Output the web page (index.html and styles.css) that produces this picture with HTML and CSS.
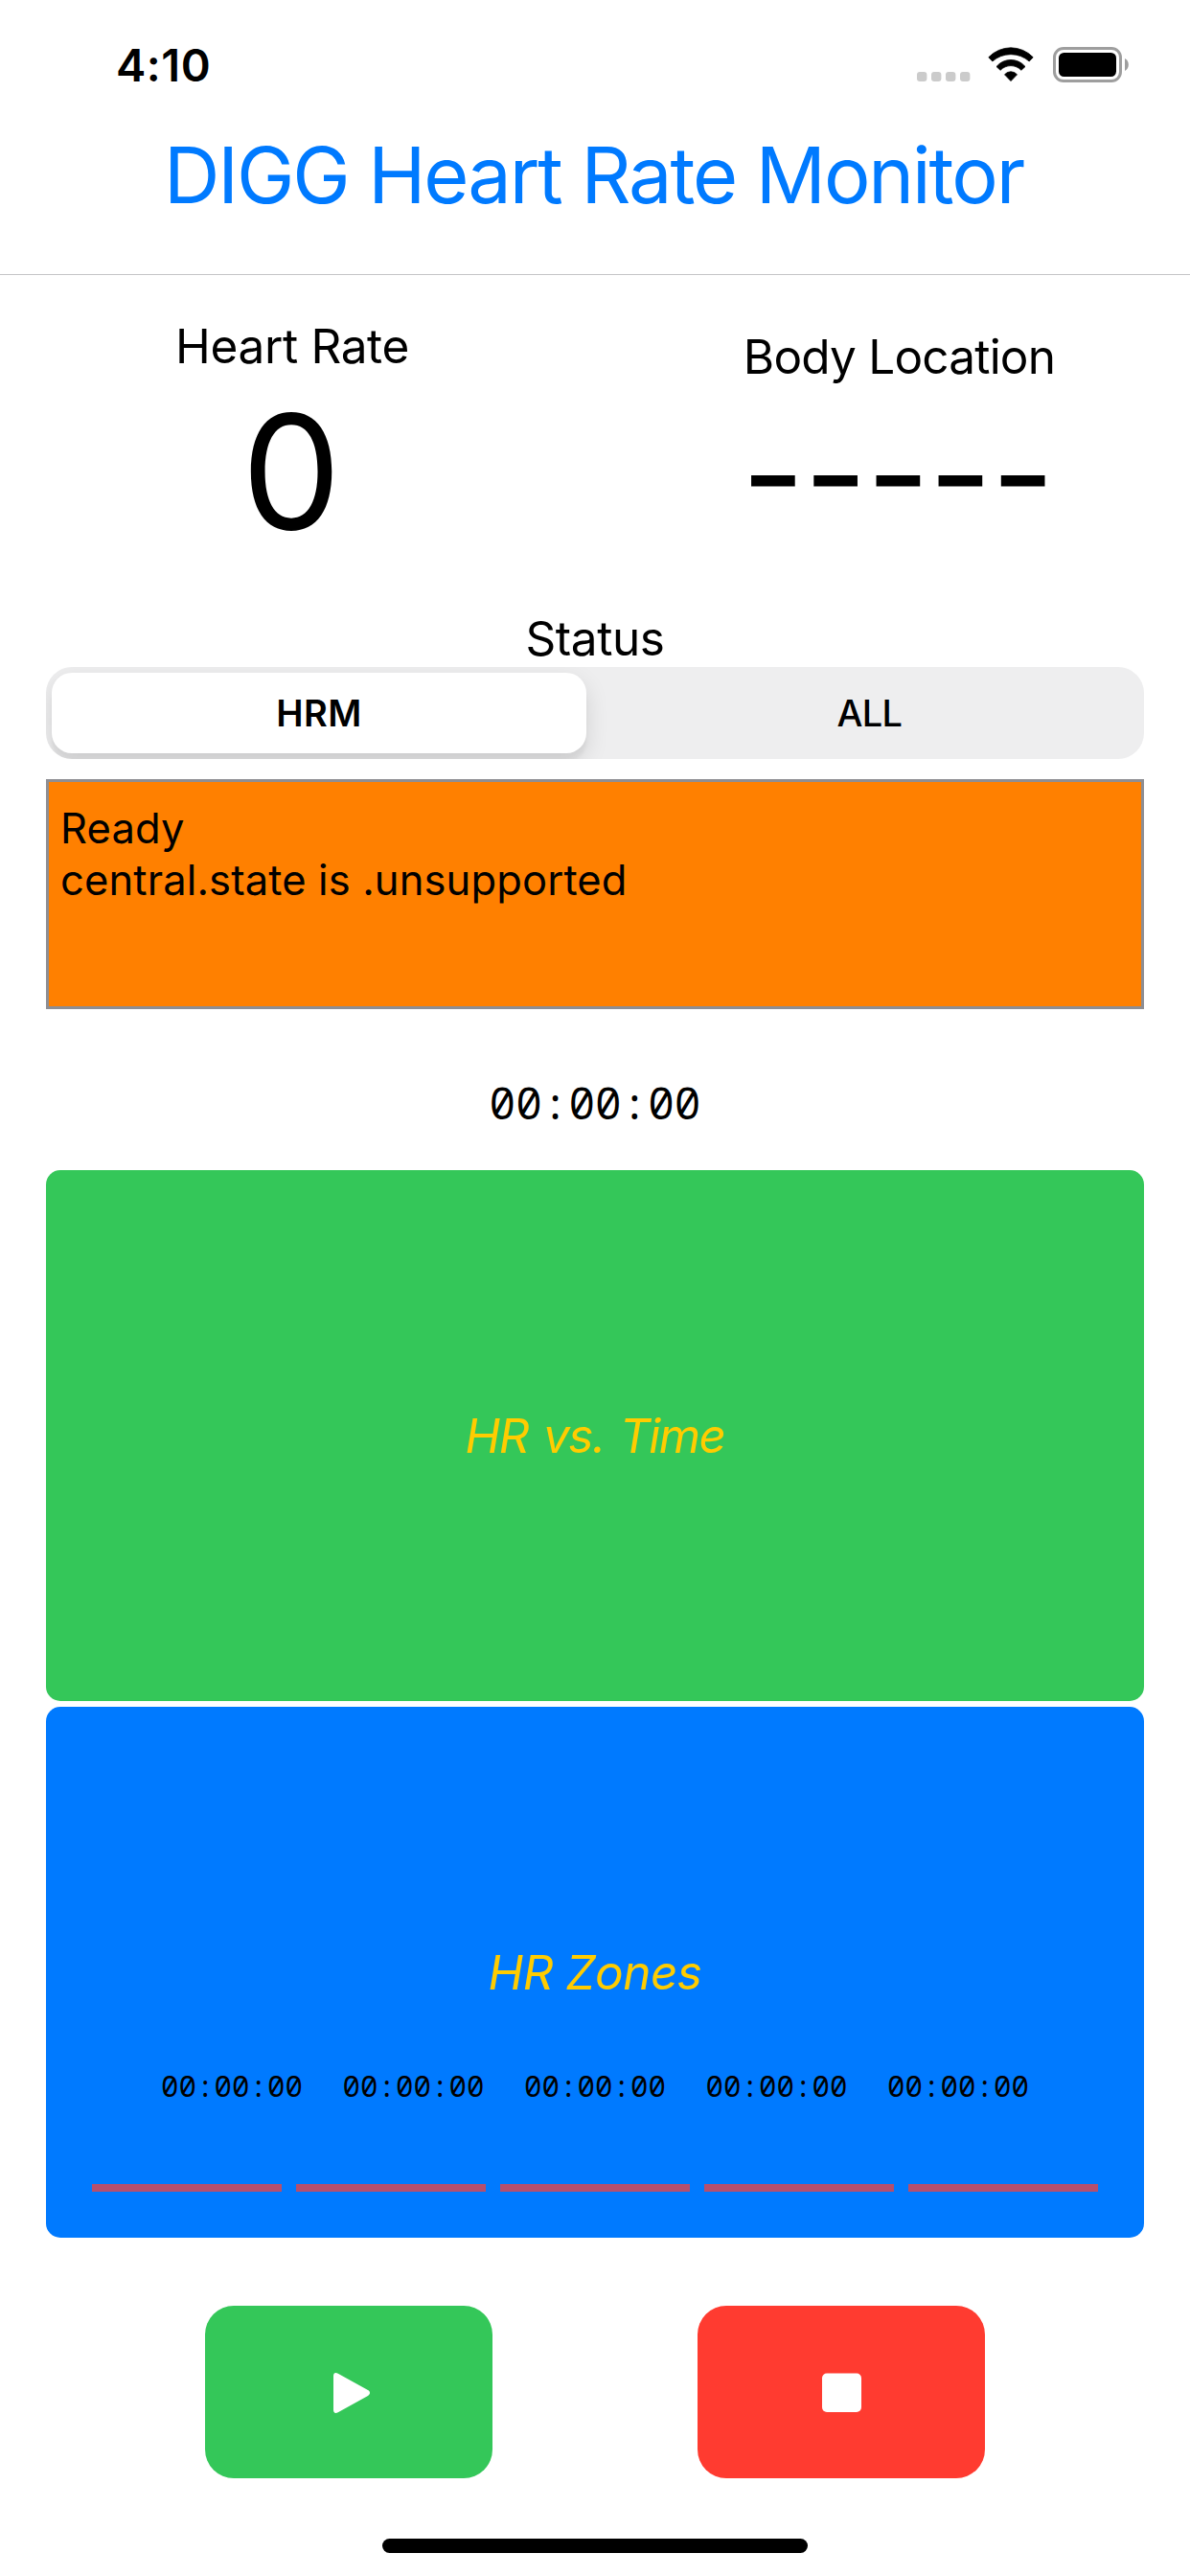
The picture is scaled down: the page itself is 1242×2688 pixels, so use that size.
FILE: index.html
```html
<!DOCTYPE html>
<html lang="en">
<head>
<meta charset="utf-8">
<title>DIGG Heart Rate Monitor</title>
<link rel="stylesheet" href="styles.css">
</head>
<body>
<div class="screen">
  <div class="status-bar">
    <span class="clock">4:10</span>
    <div class="indicators">
      <svg class="cellular" width="57" height="38" viewBox="0 0 57 38" fill="#cbcbcb">
        <rect x="0" y="26" width="10.4" height="10" rx="3"/>
        <rect x="15" y="26" width="10.4" height="10" rx="3"/>
        <rect x="30" y="26" width="10.4" height="10" rx="3"/>
        <rect x="45" y="26" width="10.4" height="10" rx="3"/>
      </svg>
      <svg class="wifi" width="48" height="38" viewBox="0 0 48 38" stroke="#000" stroke-width="0.8" stroke-linejoin="round">
        <path d="M0.8 10.8A32 32 0 0 1 47.2 10.8L43.2 15A28.9 28.9 0 0 0 4.8 15Z"/>
        <path d="M9 20.5A19.5 19.5 0 0 1 39 20.5L34.9 24.3A15 15 0 0 0 13.1 24.3Z"/>
        <path d="M17.5 28.8A8.5 8.5 0 0 1 30.5 28.8L24 35.6Z"/>
      </svg>
      <svg class="battery" width="79" height="38" viewBox="0 0 79 38">
        <rect x="1.5" y="1.5" width="69" height="34" rx="9.5" fill="none" stroke="#9e9e9e" stroke-width="3"/>
        <rect x="6" y="6" width="60" height="25" rx="5.5"/>
        <path d="M75 12C77.600 13.200 78.800 15.700 78.800 18.500S77.600 23.800 75 25Z" fill="#9e9e9e"/>
      </svg>
    </div>
  </div>

  <header class="nav"><h1 class="nav-title">DIGG Heart Rate Monitor</h1></header>

  <section class="metrics">
    <div class="metric metric-rate">
      <div class="label label-rate">Heart Rate</div>
      <div class="rate">0</div>
    </div>
    <div class="metric metric-location">
      <div class="label label-location">Body Location</div>
      <div class="location">-----</div>
    </div>
  </section>

  <main class="content">
    <div class="label label-status">Status</div>
    <div class="segmented">
      <div class="segment segment-on">HRM</div>
      <div class="segment">ALL</div>
    </div>
    <div class="log">Ready<br>central.state is .unsupported</div>
    <div class="timer">00:00:00</div>
    <div class="chart chart-time"><div class="chart-title title-time">HR vs. Time</div></div>
    <div class="chart chart-zones">
      <div class="chart-title">HR Zones</div>
      <div class="zone-times">
        <span>00:00:00</span><span>00:00:00</span><span>00:00:00</span><span>00:00:00</span><span>00:00:00</span>
      </div>
      <div class="zone-bars"><i></i><i></i><i></i><i></i><i></i></div>
    </div>
  </main>

  <div class="controls">
    <button class="control start" aria-label="Start">
      <svg width="48" height="48" viewBox="0 0 48 48" fill="#fff"><path d="M8 7.500C8 4.200 10 3.200 12.800 4.800L44 22.100C46.700 23.600 46.700 26.400 44 27.900L12.800 45.200C10 46.800 8 45.800 8 42.500Z"/></svg>
    </button>
    <button class="control stop" aria-label="Stop">
      <svg width="48" height="48" viewBox="0 0 48 48" fill="#fff"><rect x="4" y="4.500" width="41" height="40.500" rx="5"/></svg>
    </button>
  </div>
  <div class="home-indicator"></div>
</div>
</body>
</html>
```
FILE: styles.css
```css
* { box-sizing: border-box; }

body {
  margin: 0;
  background: #fff;
  color: #000;
  font-family: Inter, "Liberation Sans", sans-serif;
}

.screen {
  display: flex;
  flex-direction: column;
  width: 1242px;
  height: 2688px;
  overflow: hidden;
}

.status-bar {
  display: flex;
  align-items: center;
  justify-content: space-between;
  height: 136px;
  padding: 0 64px 0 121px;
}
.clock { padding-bottom: 2px; font-size: 47px; font-weight: 600; letter-spacing: 0.5px; }
.indicators { display: flex; align-items: center; }
.wifi { margin: 0 20px 0 17px; }

.nav { height: 151px; border-bottom: 1px solid #c4c4c6; }
.nav-title {
  margin: 0;
  padding-right: 3px;
  color: #007aff;
  font-size: 81px;
  font-weight: 400;
  line-height: 95px;
  letter-spacing: -2.1px;
  text-align: center;
}

.metrics {
  display: grid;
  grid-template-columns: 610px 610px;
  column-gap: 22px;
  height: 349px;
  text-align: center;
}
.metric-rate { padding-top: 44px; }
.metric-location { padding-top: 55px; }
.label { font-size: 49.5px; line-height: 60px; text-align: center; }
.label-rate { letter-spacing: -0.35px; }
.label-location { letter-spacing: -0.8px; padding-left: 3px; }
.label-status { letter-spacing: -0.4px; }
.rate { margin-top: 21px; padding-right: 2px; font-size: 165px; line-height: 160px; }
.location { margin-top: 22px; font-size: 143px; line-height: 140px; letter-spacing: -0.6px; }

.content { padding: 0 48px; }

.segmented {
  display: flex;
  gap: 9px;
  height: 96px;
  padding: 6px 0 6px 6px;
  border-radius: 27px;
  background: #eeeeef;
  overflow: hidden;
}
.segment {
  flex: 1;
  font-size: 38px;
  font-weight: 500;
  line-height: 84px;
  letter-spacing: -0.7px;
  text-align: center;
}
.segment-on {
  flex: 0 0 558px;
  border-radius: 21px;
  background: #fff;
  font-weight: 600;
  letter-spacing: 0.4px;
  box-shadow: 0 9px 24px rgba(0, 0, 0, 0.12), 0 9px 3px rgba(0, 0, 0, 0.04);
}

.log {
  height: 240px;
  margin-top: 21px;
  padding: 21px 12px;
  border: 3px solid #8e8e93;
  background: #ff8000;
  font-size: 43.5px;
  line-height: 54px;
  letter-spacing: 0.13px;
}

.timer {
  margin: 67px 0 41px;
  font-family: "Noto Sans Mono", "DejaVu Sans Mono", monospace;
  font-size: 46px;
  line-height: 60px;
  text-align: center;
}

.chart { height: 554px; padding-top: 247px; border-radius: 15px; }
.chart-time { background: #34c759; }
.chart-zones { margin-top: 6px; background: #007aff; }
.chart-title {
  color: #ffcc00;
  font-size: 49.5px;
  font-style: italic;
  line-height: 60px;
  letter-spacing: -0.57px;
  text-align: center;
}
.title-time { letter-spacing: -1.5px; word-spacing: 3.5px; }

.zone-times {
  display: flex;
  justify-content: center;
  gap: 41.7px;
  margin-top: 68px;
  font-family: "Noto Sans Mono", "DejaVu Sans Mono", monospace;
  font-size: 30.8px;
  line-height: 40px;
}
.zone-bars { display: flex; gap: 15px; margin-top: 83px; padding: 0 48px; }
.zone-bars i { flex: 1; height: 8px; background: #b54f6e; }

.controls { display: flex; justify-content: center; gap: 214px; margin-top: 71px; }
.control {
  display: flex;
  align-items: center;
  justify-content: center;
  width: 300px;
  height: 180px;
  padding: 0;
  border: 0;
  border-radius: 30px;
}
.start { background: #34c759; }
.stop { background: #ff3b30; }

.home-indicator {
  width: 444px;
  height: 15px;
  margin: 63px auto 0;
  border-radius: 8px;
  background: #000;
}
```
